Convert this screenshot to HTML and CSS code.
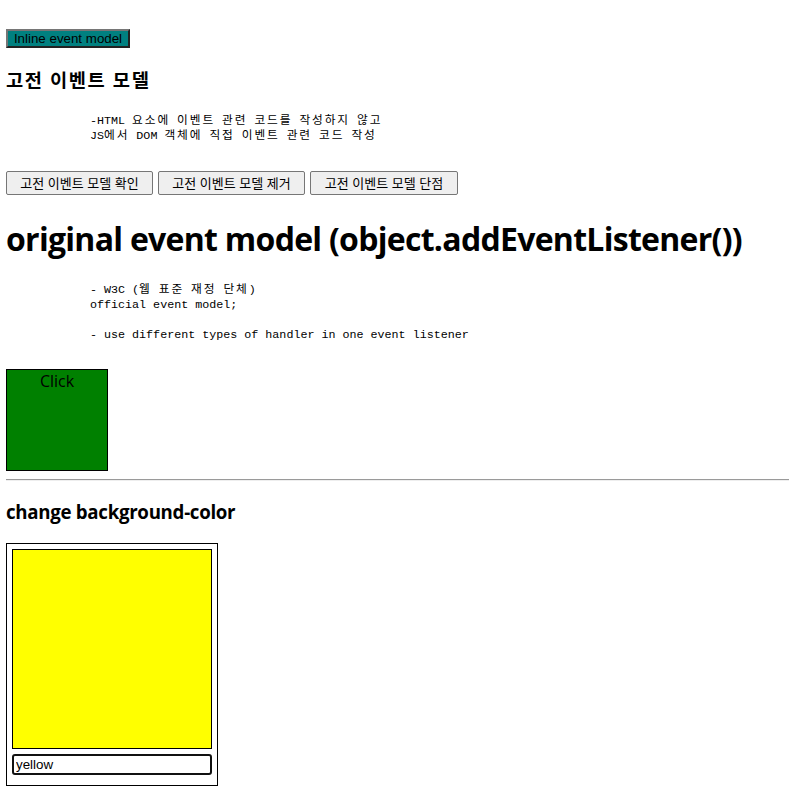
FILE: index.html
```html
<!DOCTYPE html>
<html lang="ko">
<head>
<meta charset="utf-8">
<title>event model</title>
<link rel="stylesheet" href="styles.css">
</head>
<body>
<div class="top"><button class="inline-btn">Inline event model</button></div>
<h3 class="h3 h3a">고전 이벤트 모델</h3>
<pre class="pre pre1">-HTML <span class="ko">요소에</span> <span class="ko">이벤트</span> <span class="ko">관련</span> <span class="ko">코드를</span> <span class="ko">작성하지</span> <span class="ko">않고</span>
JS<span class="ko">에서</span> DOM <span class="ko">객체에</span> <span class="ko">직접</span> <span class="ko">이벤트</span> <span class="ko">관련</span> <span class="ko">코드</span> <span class="ko">작성</span></pre>
<div class="btn-row">
  <button class="btn">고전 이벤트 모델 확인</button>
  <button class="btn">고전 이벤트 모델 제거</button>
  <button class="btn">고전 이벤트 모델 단점</button>
</div>
<h1 class="h1">original event model (object.addEventListener())</h1>
<pre class="pre pre2">- W3C (<span class="ko">웹</span> <span class="ko">표준</span> <span class="ko">재정</span> <span class="ko">단체</span>)
official event model;

- use different types of handler in one event listener</pre>
<div class="click-box">Click</div>
<hr class="rule">
<h3 class="h3 h3b">change background-color</h3>
<div class="outer">
  <div class="yellow"></div>
  <input class="color-input" type="text" value="yellow">
</div>
</body>
</html>
```
FILE: styles.css
```css
html, body {
  margin: 0;
  padding: 0;
  background: #fff;
}
body {
  padding: 0 0 0 6px;
  font-family: "Open Sans", "Noto Sans CJK KR", sans-serif;
  color: #000;
  overflow: hidden;
}
.top {
  padding-top: 29px;
  height: 19px;
}
.inline-btn {
  display: block;
  margin: 0;
  height: 19px;
  width: 124px;
  padding: 0;
  background: #008080;
  border: 2px solid;
  border-color: #767676 #222 #222 #767676;
  font-family: "Liberation Sans", Arial, sans-serif;
  font-size: 13.33px;
  color: #000;
  text-align: center;
  line-height: 15px;
}
.h3 {
  margin: 19px 0 0;
  font-size: 18.7px;
  line-height: 26px;
  font-weight: 700;
  font-family: "Open Sans", "Noto Sans CJK KR", sans-serif;
  letter-spacing: -0.2px;
}
.h3a {
  letter-spacing: 1.6px;
}
.pre {
  margin: 0;
  padding-left: 84px;
  font-family: "Liberation Mono", "Noto Sans CJK KR", monospace;
  font-size: 11.7px;
  line-height: 15px;
  font-weight: 400;
}
.ko {
  display: inline-block;
  line-height: 15px;
  height: 15px;
  overflow: hidden;
  vertical-align: top;
  letter-spacing: 1.9px;
}
.pre1 {
  margin-top: 21px;
  height: 30px;
}
.btn-row {
  display: flex;
  gap: 5px;
  margin-top: 27px;
}
.btn {
  margin: 0;
  height: 24px;
  padding: 0 6px;
  background: #efefef;
  border: 1px solid #767676;
  border-radius: 2px;
  font-family: "Noto Sans CJK KR", sans-serif;
  font-size: 13px;
  color: #000;
  line-height: 20px;
  width: 147px;
}
.btn:nth-child(3) {
  width: 148px;
}
.h1 {
  margin: 22px 0 0;
  font-size: 32px;
  line-height: 44px;
  font-weight: 700;
  letter-spacing: -0.72px;
}
.pre2 {
  margin-top: 22px;
  height: 60px;
}
.click-box {
  margin-top: 26px;
  width: 100px;
  height: 100px;
  border: 1px solid #000;
  background: #008000;
  text-align: center;
  font-size: 16px;
  line-height: 23px;
  color: #000;
}
.rule {
  margin: 8px -6px 0 0;
  border: 0;
  border-top: 1px solid #9a9a9a;
  border-bottom: 1px solid #eee;
  height: 0;
}
.h3b {
  margin-top: 18px;
  letter-spacing: -0.3px;
}
.outer {
  margin-top: 18px;
  width: 200px;
  padding: 5px 5px 10px;
  border: 1px solid #000;
  display: flex;
  flex-direction: column;
  gap: 5px;
}
.yellow {
  width: 198px;
  height: 198px;
  border: 1px solid #000;
  background: #ffff00;
}
.color-input {
  margin: 0;
  box-sizing: border-box;
  width: 200px;
  height: 21px;
  padding: 0 2px;
  border: 2px solid #111;
  border-radius: 3px;
  font-family: "Liberation Sans", Arial, sans-serif;
  font-size: 13.33px;
  color: #000;
}
```
